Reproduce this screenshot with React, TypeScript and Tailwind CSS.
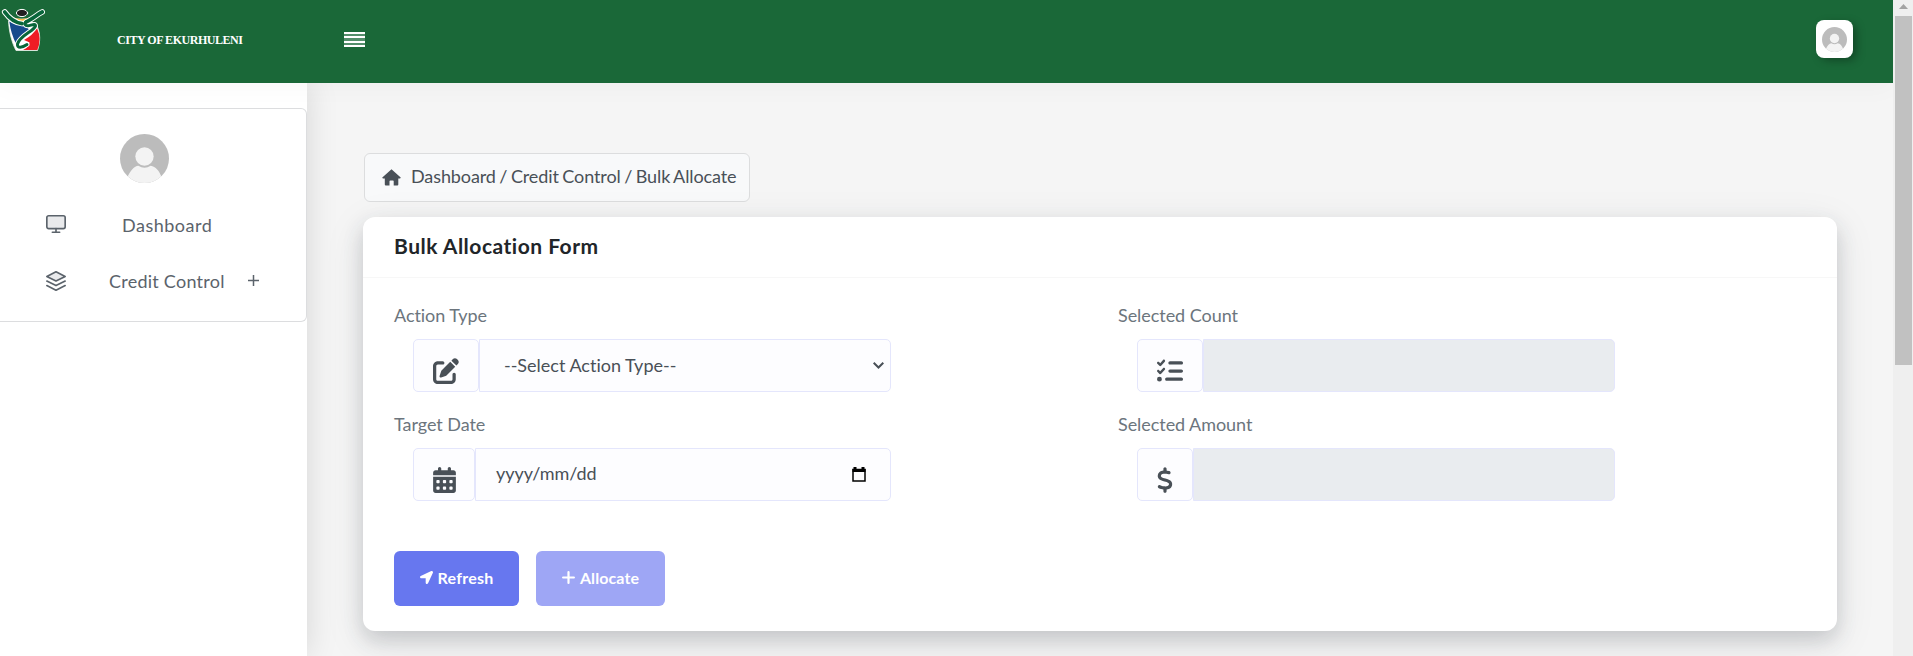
import type { ReactNode } from 'react';
import { FaPenToSquare, FaCalendarDays, FaListCheck, FaDollarSign } from 'react-icons/fa6';
import { FaLocationArrow } from 'react-icons/fa';

function Avatar({ className }: { className: string }) {
  return (
    <svg viewBox="0 0 48 48" className={className}>
      <defs>
        <clipPath id="avatar-clip">
          <circle cx="24" cy="24" r="24" />
        </clipPath>
      </defs>
      <circle cx="24" cy="24" r="24" fill="#bcbcbc" />
      <g clipPath="url(#avatar-clip)" fill="#f3f3f3">
        <path d="M7 43C10 36 14 31.5 18 31.2Q24 35 30 31.2C35 32 38.500 36 41 43L41 49H7Z" />
        <circle cx="24" cy="22" r="9" />
      </g>
    </svg>
  );
}

function Logo({ className }: { className: string }) {
  return (
    <svg viewBox="0 0 46 46" className={className} fill="none" strokeLinecap="round" strokeLinejoin="round">
      <path d="M8.500 14C9 25 12 36 16 43.500H37.500C40.500 35 40.500 26 37 19L28 12H14Z" fill="#fff" stroke="#e8efe9" strokeWidth="0.800" />
      <path d="M9.300 14.500C14 17.500 20 18 25 18.500L29 22.500L16 36.500Q11 27 9.300 14.500Z" fill="#164a8c" />
      <path d="M37 21Q42 32 37.300 43H23Q29 40 29.500 35.500L24 33Q33 28 37 21Z" fill="#ee1c25" />
      <path d="M13.500 10.200C18 12.500 25 12.500 30 10.200L23 16Z" fill="#fdb940" />
      <g stroke="#fff" strokeWidth="5">
        <path d="M4.700 5C9 11 14 15.500 22 16.600" strokeWidth="5.600" />
        <path d="M42.200 5C37 7.500 32 12.500 26 15" strokeWidth="5.600" />
        <path d="M26 15C24 16.500 25 19 28 18.800C32 18 35.500 16 35.500 19C34 24 20 28.500 17.500 37C17 41.500 22 41 27 37.500" />
      </g>
      <g stroke="#08663a" strokeWidth="3">
        <path d="M4.700 5C9 11 14 15.500 22 16.600" strokeWidth="3.800" />
        <path d="M42.200 5C37 7.500 32 12.500 26 15" strokeWidth="3.800" />
        <path d="M26 15C24 16.500 25 19 28 18.800C32 18 35.500 16 35.500 19C34 24 20 28.500 17.500 37C17 41.500 22 41 27 37.500" />
      </g>
      <ellipse cx="22" cy="6" rx="5.600" ry="3.600" fill="#231f20" stroke="#fff" strokeWidth="1" />
    </svg>
  );
}

function Group({ label, icon, addon, children, disabled }: { label: string; icon: ReactNode; addon: string; children?: ReactNode; disabled?: boolean }) {
  return (
    <div className="h-[109px]">
      <div className="h-6 text-[18px] leading-[23px] tracking-[-0.05px] text-[#6c757d]">{label}</div>
      <div className="mt-[11px] ml-[19px] flex h-[53px] w-[478px]">
        <div className={`flex shrink-0 justify-center rounded-[5px] border border-[#e4e6fc] bg-[#fdfdff] pt-[18px] text-[#495057] ${addon}`}>{icon}</div>
        <div className={`flex flex-1 items-center rounded-r-[5px] border border-[#e4e6fc] text-[18px] text-[#495057] ${disabled ? 'bg-[#e9ecef]' : 'bg-[#fdfdff]'}`}>{children}</div>
      </div>
    </div>
  );
}

export default function App() {
  return (
    <div className="flex h-[656px] w-[1913px] overflow-hidden bg-[#f5f5f5] font-[Lato,sans-serif] [font-variant-ligatures:none]">
      <div className="flex w-[1893px] flex-col">
        <header className="relative z-10 flex h-[83px] shrink-0 bg-[#1a6838] shadow-[0_4px_25px_0_rgba(0,0,0,0.03)]">
          <div className="flex w-[307px]">
            <div className="pt-[7px]">
              <Logo className="block h-[46px] w-[46px]" />
            </div>
            <div className="ml-[71px] pt-[32px] font-['Liberation_Serif',serif] text-[12px] leading-4 font-bold tracking-[-0.46px] whitespace-nowrap text-white">CITY OF EKURHULENI</div>
          </div>
          <div className="mt-8 ml-[37px] flex h-[15px] w-[21px] flex-col justify-between bg-white/25">
            <div className="h-[2px] bg-white" />
            <div className="h-[2px] bg-white" />
            <div className="h-[2px] bg-white" />
            <div className="h-[2px] bg-white" />
          </div>
          <div className="mt-5 mr-10 ml-auto flex h-[38px] w-[37px] items-center justify-center rounded-[8px] bg-white shadow-[4px_3px_10px_-1px_rgba(0,0,0,0.35)]">
            <Avatar className="h-[25px] w-[25px]" />
          </div>
        </header>
        <div className="flex flex-1">
          <aside className="w-[307px] shrink-0 bg-white pt-[25px] shadow-[0_0_30px_rgba(0,0,0,0.13)]">
            <nav className="h-[214px] rounded-r-[6px] border border-l-0 border-[#dcdddf] text-[18px] text-[#5b636b]">
              <div className="pt-[25px] pl-[120px]">
                <Avatar className="h-[49px] w-[49px]" />
              </div>
              <div className="mt-[30px] flex h-6 items-center">
                <svg viewBox="0 0 24 24" className="mt-[-2px] ml-[44.500px] h-[22px] w-[22px]" fill="#e9eaec" stroke="currentColor" strokeWidth="1.800" strokeLinecap="round" strokeLinejoin="round">
                  <rect x="2" y="3" width="20" height="14" rx="2" />
                  <path d="M8 21h8M12 17v4" />
                </svg>
                <span className="ml-[55.500px] tracking-[0.5px]">Dashboard</span>
              </div>
              <div className="mt-8 flex h-6 items-center">
                <svg viewBox="0 0 24 24" className="mt-[-1px] ml-[44.500px] h-[22px] w-[22px]" fill="none" stroke="currentColor" strokeWidth="1.800" strokeLinecap="round" strokeLinejoin="round">
                  <path d="M12 2L2 7l10 5 10-5-10-5z" fill="#e9eaec" />
                  <path d="M2 17l10 5 10-5M2 12l10 5 10-5" />
                </svg>
                <span className="ml-[42.500px] w-[115px] tracking-[0.25px] whitespace-nowrap">Credit Control</span>
                <svg viewBox="0 0 11 11" className="mt-[-1px] ml-[24px] h-[11px] w-[11px]" stroke="currentColor" strokeWidth="1.500">
                  <path d="M5.500 0v11M0 5.500h11" />
                </svg>
              </div>
            </nav>
          </aside>
          <main className="flex-1 pt-[70px] pl-[56px]">
            <div className="ml-px flex h-[49px] w-[386px] items-center rounded-[6px] border border-[#dcddde] bg-[#f8f9fa] text-[18px] text-[#495057]">
              <svg viewBox="0 0 19 17" className="ml-[17px] h-[17px] w-[19px]" fill="currentColor">
                <path d="M9.500 0.300L18.700 8.600Q18.900 9.400 18 9.400H16.300V15.500Q16.300 16.500 15.300 16.500H11.700V12.200Q11.700 11.400 11 11.400H8.300Q7.500 11.400 7.500 12.200V16.500H3.800Q2.800 16.500 2.800 15.500V9.400H1Q0.100 9.400 0.300 8.600Z" />
              </svg>
              <span className="ml-[10px] pb-[2px] tracking-[-0.1px] [word-spacing:-1px] whitespace-nowrap">Dashboard / Credit Control / Bulk Allocate</span>
            </div>
            <section className="mt-[15px] h-[414px] w-[1474px] rounded-[12px] bg-white shadow-[0_10px_40px_0_rgba(52,58,64,0.1),0_9px_20px_0_rgba(52,58,64,0.18)]">
              <div className="flex h-[61px] items-center border-b border-[#f7f7f7] pb-[2px] pl-[31px] text-[21px] font-bold tracking-[0.5px] text-[#212529]">Bulk Allocation Form</div>
              <div className="grid grid-cols-[724px_1fr] pt-[26px] pl-[31px]">
                <Group label="Action Type" addon="w-[66px]" icon={<FaPenToSquare className="h-[26px] w-[26px]" />}>
                  <span className="pl-[24px]">--Select Action Type--</span>
                  <svg viewBox="0 0 11 7" className="mr-[6px] ml-auto h-[7px] w-[11px]" fill="none" stroke="currentColor" strokeWidth="2">
                    <path d="M0.700 0.800L5.500 5.500L10.300 0.800" />
                  </svg>
                </Group>
                <Group label="Selected Count" addon="w-[66px]" icon={<FaListCheck className="h-[26px] w-[26px]" />} disabled />
                <Group label="Target Date" addon="w-[62px]" icon={<FaCalendarDays className="h-[26px] w-[23px]" />}>
                  <span className="pb-[2px] pl-[20px] tracking-[-0.05px]">yyyy/mm/dd</span>
                  <svg viewBox="0 0 14 15" className="mr-[24px] ml-auto h-[15px] w-[14px]" fill="none" stroke="#000">
                    <path d="M1 2.500h12v11.500H1z" strokeWidth="1.500" />
                    <path d="M0.500 3.500h13M3 0v3M11 0v3" strokeWidth="3" />
                  </svg>
                </Group>
                <Group label="Selected Amount" addon="w-[56px]" icon={<FaDollarSign className="h-[26px] w-[16px]" />} disabled />
              </div>
              <div className="mt-[29px] flex gap-[17px] pl-[31px] text-[16px] font-bold text-white">
                <button className="flex h-[55px] w-[125px] items-center justify-center gap-[5px] rounded-[6px] bg-[#6777ef] pb-[2px] tracking-[0.25px]">
                  <FaLocationArrow className="h-[13px] w-[13px]" />
                  Refresh
                </button>
                <button className="flex h-[55px] w-[129px] items-center justify-center gap-[5px] rounded-[6px] bg-[#9ea6f5] pb-[2px] tracking-[0.1px]">
                  <svg viewBox="0 0 13 13" className="h-[13px] w-[13px]" stroke="currentColor" strokeWidth="2.200" strokeLinecap="round">
                    <path d="M6.500 1.100v10.800M1.100 6.500h10.800" />
                  </svg>
                  Allocate
                </button>
              </div>
            </section>
          </main>
        </div>
      </div>
      <div className="z-20 flex w-5 flex-col bg-[#efefef] pl-[2px]">
        <svg viewBox="0 0 17 16" className="h-4 w-[17px]">
          <path d="M4 9L8.500 4L13 9Z" fill="#a3a3a3" />
        </svg>
        <div className="h-[349px] w-[17px] bg-[#c1c1c1]" />
      </div>
    </div>
  );
}
